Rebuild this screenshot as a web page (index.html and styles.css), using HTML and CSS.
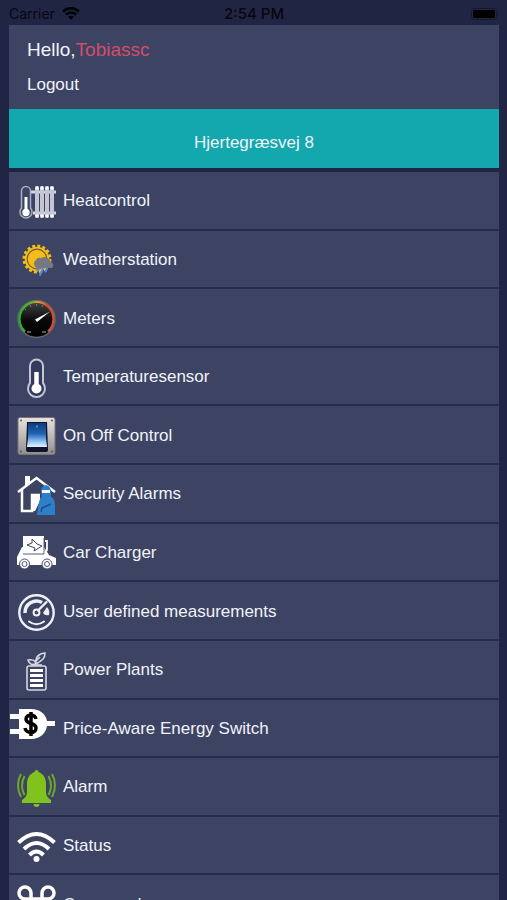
FILE: index.html
```html
<!DOCTYPE html>
<html lang="en">
<head>
<meta charset="utf-8">
<meta name="viewport" content="width=device-width, initial-scale=1">
<title>Menu</title>
<link rel="stylesheet" href="styles.css">
</head>
<body>
<div class="app">
  <div class="status">
    <span class="carrier">Carrier
      <svg class="signal" viewBox="0 0 18 13" aria-hidden="true">
        <path d="M1 4.500Q9-2 17 4.500" fill="none" stroke="#000" stroke-width="2.600"/>
        <path d="M3.800 7.500Q9 3.300 14.200 7.500" fill="none" stroke="#000" stroke-width="2.400"/>
        <path d="M6 9.800Q9 7.500 12 9.800L9 12.800Z"/>
      </svg>
    </span>
    <span class="clock">2:54 PM</span>
    <span class="power">
      <svg class="battery" viewBox="0 0 28 12" aria-hidden="true">
        <rect x=".5" y=".5" width="25" height="11" rx="3" fill="none" stroke="#15182f"/>
        <rect x="2" y="2" width="22" height="8" rx="1.500"/>
        <path d="M27 4v4" stroke="#15182f"/>
      </svg>
    </span>
  </div>
  <header class="user">
    <p class="hello">Hello,<span class="name">Tobiassc</span></p>
    <a class="logout" href="#logout">Logout</a>
  </header>
  <button class="place" type="button">Hjertegræsvej 8</button>
  <nav class="menu">
    <a class="item" href="#heat">
      <svg class="icon" viewBox="0 0 40 40" aria-hidden="true">
        <path d="M14 10h25M16 31h23" stroke="#d5d7e2" stroke-width="3"/>
        <g fill="#c3c5d3">
          <rect x="18" y="4" width="4" height="32" rx="2"/>
          <rect x="23" y="4" width="4" height="32" rx="2"/>
          <rect x="28" y="4" width="4" height="32" rx="2"/>
          <rect x="33" y="4" width="4" height="32" rx="2"/>
        </g>
        <path d="M18.500 6h19M18.500 34h19" stroke="#fff" stroke-width="3" stroke-dasharray="3 2"/>
        <path d="M4.500 26V9a4.500 4.500 0 0 1 9 0v17a6 6 0 1 1-9 0Z" fill="#3c4363" stroke="#a9adc2" stroke-width="1.500"/>
        <path d="M9 15v15" stroke="#fff" stroke-width="3"/>
        <circle cx="9" cy="30.500" r="3.700" fill="#fff"/>
      </svg>
      <span>Heatcontrol</span>
    </a>
    <a class="item" href="#weather">
      <svg class="icon" viewBox="0 0 40 40" aria-hidden="true">
        <circle cx="20" cy="19" r="13" fill="none" stroke="#f4bd18" stroke-width="3" stroke-dasharray="2.900 2.200"/>
        <circle cx="20" cy="19" r="12.300" fill="#f4bd18"/>
        <circle cx="20" cy="19" r="9.800" fill="none" stroke="#6d5c3c" stroke-width="1.200"/>
        <path d="M20 28a4.500 4.500 0 0 1-1-8 4 4 0 0 1 5-2 7 7 0 0 1 10 4 3.500 3.500 0 0 1 1 6Z" fill="#777880"/>
        <path d="M22 28.500l-1.500 2.500M26 28.500l-3 6.500M30 28.500l-1.500 3" stroke="#5288ef" stroke-width="2" stroke-linecap="round"/>
      </svg>
      <span>Weatherstation</span>
    </a>
    <a class="item" href="#meters">
      <svg class="icon" viewBox="0 0 40 40" aria-hidden="true">
        <defs>
          <linearGradient id="dial" x2="0" y2="1"><stop stop-color="#484848"/><stop offset=".55" stop-color="#080808"/><stop offset="1"/></linearGradient>
          <linearGradient id="scale"><stop stop-color="#20b32a"/><stop offset=".3" stop-color="#58b52a"/><stop offset=".55" stop-color="#d9a32a"/><stop offset=".8" stop-color="#e04b30"/></linearGradient>
        </defs>
        <circle cx="19.500" cy="20" r="18.500" fill="url(#dial)" stroke="#66666b" stroke-width="1.500"/>
        <path d="M8 32.500A17 17 0 1 1 31 32.500" fill="none" stroke="url(#scale)" stroke-width="2.200"/>
        <path d="M8 10l1 1M13 6l1 2M19.500 5v2M26 6l-1 2" stroke="#777" stroke-width="1"/>
        <path d="M18 20.500l15-8-13 10.500Z" fill="#fff"/>
        <path d="M10 33h4M25 33h4" stroke="#77777b" stroke-width="1.500"/>
      </svg>
      <span>Meters</span>
    </a>
    <a class="item" href="#temperature">
      <svg class="icon" viewBox="0 0 40 40" aria-hidden="true">
        <path d="M13 25V8a6.500 6.500 0 0 1 13 0v17a8.500 8.500 0 1 1-13 0Z" fill="#343a5b" stroke="#c3c6d6" stroke-width="2"/>
        <path d="M19.500 14v16" stroke="#fff" stroke-width="4.500"/>
        <circle cx="19.500" cy="30.500" r="5" fill="#fff"/>
      </svg>
      <span>Temperaturesensor</span>
    </a>
    <a class="item" href="#onoff">
      <svg class="icon" viewBox="0 0 40 40" aria-hidden="true">
        <defs>
          <linearGradient id="plate" x2="0" y2="1"><stop stop-color="#e6e3e0"/><stop offset=".6" stop-color="#b5b1ae"/><stop offset="1" stop-color="#8f8c8b"/></linearGradient>
          <linearGradient id="rocker" x2="0" y2="1"><stop stop-color="#0d3a7c"/><stop offset=".45" stop-color="#1f63b4"/><stop offset=".8" stop-color="#9ccbf8"/><stop offset="1" stop-color="#e4f2ff"/></linearGradient>
        </defs>
        <rect x="1" y="1.500" width="37" height="37" rx="2" fill="url(#plate)" stroke="#77757a" stroke-width="1"/>
        <path d="M10 6h20l1 28a2 2 0 0 1-2 2H11a2 2 0 0 1-2-2Z" fill="#10152a"/>
        <path d="M11 7h18v15l1 9H10l1-9Z" fill="url(#rocker)"/>
        <path d="M20 9v3" stroke="#75a5e0"/>
        <g fill="#55545a"><circle cx="4" cy="4.500" r="1"/><circle cx="35" cy="4.500" r="1"/><circle cx="4" cy="35.500" r="1"/><circle cx="35" cy="35.500" r="1"/></g>
      </svg>
      <span>On Off Control</span>
    </a>
    <a class="item" href="#security">
      <svg class="icon" viewBox="0 0 40 40" aria-hidden="true">
        <path d="M1 17L19.500 3 38 17" fill="none" stroke="#fff" stroke-width="2.500"/>
        <path d="M8 1h5v6l-5 4Z" fill="#fff"/>
        <path d="M5 14v22h10V20h8" fill="none" stroke="#fff" stroke-width="2.500"/>
        <path d="M15 19h8v7l-5 10h-3Z" fill="#fff"/>
        <path d="M24 17c0-9 10-9 10 0v5c3 1 4 4 4 9v9H20l2-13c1-3 1-4 3-5Z" fill="#2e7fca"/>
        <path d="M25 15h8v3h-8Z" fill="#f3f8ff"/>
        <path d="M24 37l1-4 9-4" fill="none" stroke="#1f4f8b" stroke-width="1.500"/>
      </svg>
      <span>Security Alarms</span>
    </a>
    <a class="item" href="#car">
      <svg class="icon" viewBox="0 0 40 40" aria-hidden="true">
        <path d="M0 32v-8l5-10h22l5 8 7 3v7Z" fill="#fff"/>
        <path d="M6 3h21v18H6Z" fill="#fff"/>
        <path d="M6 21h21V5" fill="none" stroke="#555c7c" stroke-width="1"/>
        <path d="M28 8h2v9l-2 3" fill="none" stroke="#fff" stroke-width="1.800"/>
        <path d="M15 6l0 4-5 2 8 3-1 3 8-5-5-2Z" fill="#fff" stroke="#40465c" stroke-width="1"/>
        <g fill="#fff" stroke="#4b5274"><circle cx="7.500" cy="31" r="5"/><circle cx="30" cy="31" r="5"/></g>
        <g fill="none" stroke="#4b5274" stroke-width="1"><circle cx="7.500" cy="31" r="2.500"/><circle cx="30" cy="31" r="2.500"/></g>
      </svg>
      <span>Car Charger</span>
    </a>
    <a class="item" href="#measurements">
      <svg class="icon" viewBox="0 0 40 40" aria-hidden="true">
        <g fill="none" stroke="#eff0f7" stroke-linecap="round">
          <circle cx="19.500" cy="20.500" r="17.200" stroke-width="2.400"/>
          <path d="M8 21a11.500 11.500 0 0 1 17-10.500" stroke-width="3.500" stroke-linecap="butt"/>
          <path d="M12 29.500q7.500 5.500 15 0" stroke-width="2"/>
          <path d="M21 18.500L29.500 10" stroke-width="2.400"/>
          <circle cx="19.500" cy="20.500" r="2.900" stroke-width="2"/>
        </g>
        <path d="M30 15q3 3 2 8-4 1-6-2Z" fill="#eff0f7"/>
      </svg>
      <span>User defined measurements</span>
    </a>
    <a class="item" href="#plants">
      <svg class="icon" viewBox="0 0 40 40" aria-hidden="true">
        <g fill="none" stroke="#d5d7e4" stroke-width="1.600">
          <path d="M19 13q-1-6 3-9 3-2 6-2 0 4-2 6-3 3-7 5M19 13q-1-4-4-4-2-.5-4 0 1 3 3 4 2 .5 5 0M19 10l4-4"/>
          <rect x="10" y="15" width="19" height="24" rx="2"/>
          <path d="M14 14h11"/>
        </g>
        <path d="M13 18h13v3H13ZM13 23h13v3H13ZM13 28h13v3H13ZM13 33h13v3H13Z" fill="#fff"/>
      </svg>
      <span>Power Plants</span>
    </a>
    <a class="item" href="#price">
      <svg class="icon" viewBox="0 0 40 40" aria-hidden="true">
        <path d="M-7 5H2V0h12c9 0 15 5 16 12h8v5h-8c-1 7-7 13-16 13H2v-5H-7v-5H2V10H-7Z" fill="#fff"/>
        <path d="M19 10c-1-5-10-5-10 0 0 6 10 3 10 9 0 6-10 6-11 0M14 3v24" fill="none" stroke="#000" stroke-width="3.500"/>
      </svg>
      <span>Price-Aware Energy Switch</span>
    </a>
    <a class="item" href="#alarm">
      <svg class="icon" viewBox="0 0 40 40" aria-hidden="true">
        <path d="M17.500 4a2 2 0 1 1 4 0c5 2 7.500 6 7.500 12v8c0 4 2 6 5 8v3H5v-3c3-2 5-4 5-8v-8c0-6 2.500-10 7.500-12ZM16.500 36h6a3 3 0 0 1-6 0Z" fill="#7fc31c"/>
        <path d="M7.500 8q-5 10 0 19M4 6q-6 11 0 23M31.500 8q5 10 0 19M35 6q6 11 0 23" fill="none" stroke="#6fa82b" stroke-width="2"/>
      </svg>
      <span>Alarm</span>
    </a>
    <a class="item" href="#status">
      <svg class="icon" viewBox="0 0 40 40" aria-hidden="true">
        <g fill="none" stroke="#fff" stroke-width="4">
          <path d="M1.500 15.500q18-17 36 0"/>
          <path d="M7 22q12.500-12 25 0"/>
          <path d="M12.500 28q7-7 14 0"/>
        </g>
        <circle cx="19.500" cy="32" r="3" fill="#fff"/>
      </svg>
      <span>Status</span>
    </a>
    <a class="item" href="#commands">
      <svg class="icon" viewBox="0 0 40 40" aria-hidden="true">
        <path d="M14 14H8a6 6 0 1 1 6-6v23a6 6 0 1 1-6-6h23a6 6 0 1 1-6 6V8a6 6 0 1 1 6 6Z" fill="none" stroke="#fff" stroke-width="3.500"/>
      </svg>
      <span>Commands</span>
    </a>
  </nav>
</div>
</body>
</html>
```
FILE: styles.css
```css
* {
  box-sizing: border-box;
}

body {
  margin: 0;
  background: #212544;
  color: #f1f3fa;
  font: 17px/20px "Liberation Sans", Arial, sans-serif;
}

a {
  color: inherit;
  text-decoration: none;
}

.app {
  height: 100vh;
  overflow: hidden;
  padding: 0 8px 0 9px;
}

.status {
  display: grid;
  grid-template-columns: 1fr auto 1fr;
  align-items: center;
  height: 25px;
  padding-top: 2px;
  color: #06070f;
  font: 14px/20px Inter, "Liberation Sans", sans-serif;
}

.carrier {
  display: flex;
  align-items: center;
  gap: 7px;
}

.signal {
  width: 18px;
  height: 13px;
}

.clock {
  font-size: 15px;
  font-weight: 500;
}

.power {
  display: flex;
  justify-content: flex-end;
}

.battery {
  width: 28px;
  height: 12px;
}

.user {
  padding: 13px 18px 14px;
  background: #3c4363;
}

.hello {
  margin: 0 0 13px;
  font-size: 19px;
  line-height: 24px;
}

.name {
  color: #d34d69;
}

.logout {
  display: block;
}

.place {
  display: block;
  width: 100%;
  height: 59px;
  margin: 0 0 4px;
  padding: 8px 0 0;
  border: 0;
  background: #12a8ad;
  color: inherit;
  font: inherit;
}

.menu {
  display: grid;
  grid-auto-rows: 1fr;
  min-height: 762px;
}

.item {
  display: flex;
  align-items: center;
  gap: 6px;
  padding: 2px 8px 0;
  border-bottom: 2px solid #282d4d;
  background: #3c4363;
}

.icon {
  flex: none;
  width: 40px;
  height: 40px;
  margin-top: 1px;
  overflow: visible;
}
```
